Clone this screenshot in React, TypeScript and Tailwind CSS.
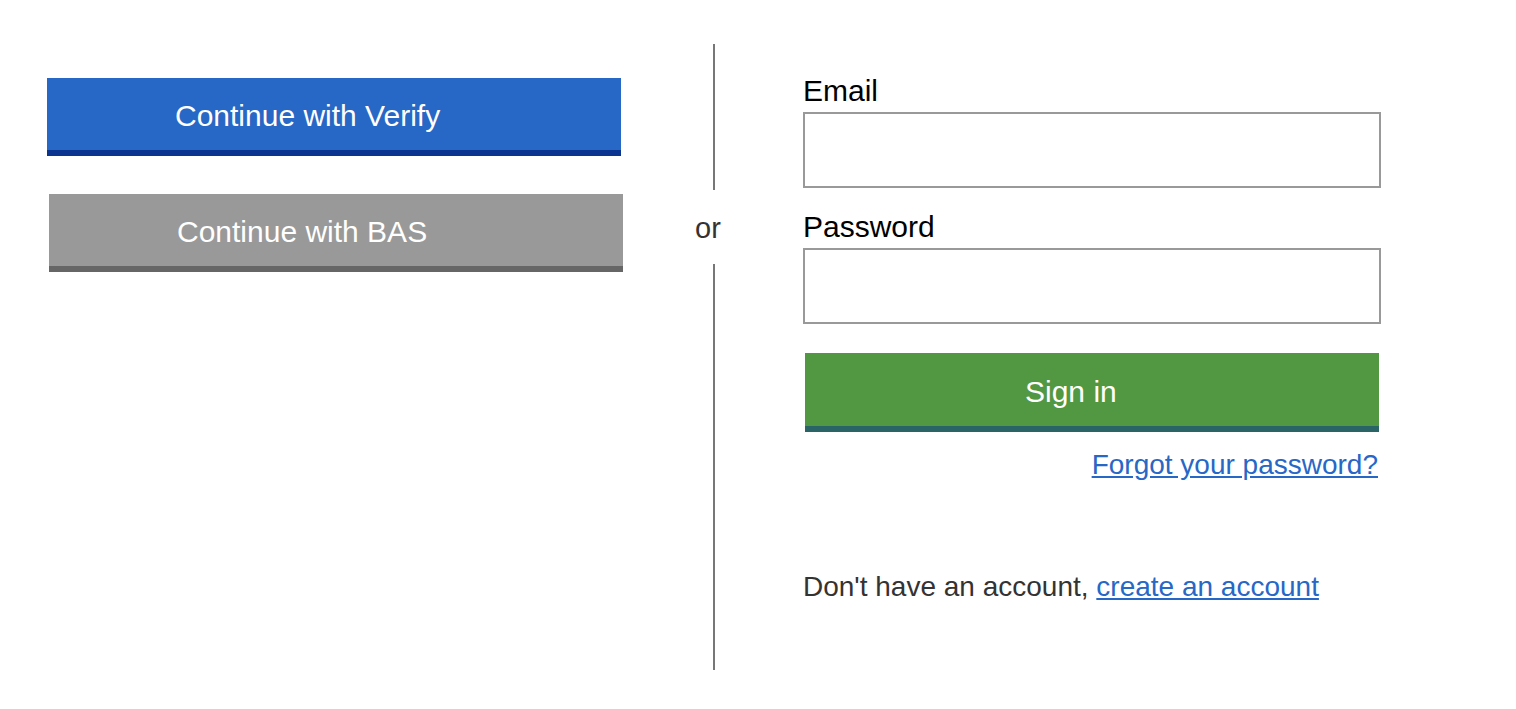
const Label = (props: { text: string; className?: string }) => (
  <label className={`block text-[30px] leading-[34px] text-black mb-[4px] ${props.className ?? ""}`}>
    {props.text}
  </label>
);

export default function App() {
  return (
    <div className="min-h-screen bg-white font-['Liberation_Sans',Arial,sans-serif]">
      <div className="flex pt-[44px]">
        {/* left: federated sign-in */}
        <div className="w-[576px] ml-[47px] pt-[34px]">
          <button className="flex items-center w-[574px] h-[78px] pl-[128px] pt-[3px] bg-[#2767c6] border-b-[6px] border-[#0b3490] text-white text-[30px]">
            Continue with Verify
          </button>
          <button className="flex items-center w-[574px] h-[78px] ml-[2px] mt-[38px] pl-[128px] pt-[2px] bg-[#999999] border-b-[6px] border-[#666666] text-white text-[30px]">
            Continue with BAS
          </button>
        </div>

        {/* divider */}
        <div className="w-[180px] flex flex-col items-center">
          <div className="w-[2px] h-[146px] bg-[#777777] ml-[2px]" />
          <div className="h-[74px] flex items-center pr-[10px] pt-[3px] text-[29px] text-[#333333]">or</div>
          <div className="w-[2px] h-[406px] bg-[#777777] ml-[2px]" />
        </div>

        {/* right: email sign-in */}
        <div className="w-[578px] pt-[30px]">
          <Label text="Email" />
          <input type="email" className="block w-[578px] h-[76px] border-2 border-[#999999] outline-none px-3 text-[24px]" />
          <Label text="Password" className="mt-[22px]" />
          <input type="password" className="block w-[578px] h-[76px] border-2 border-[#999999] outline-none px-3 text-[24px]" />
          <button className="flex items-center w-[574px] h-[79px] ml-[2px] mt-[29px] pl-[220px] pt-[3px] bg-[#529741] border-b-[6px] border-[#2a6467] text-white text-[30px]">
            Sign in
          </button>
          <div className="flex justify-end pr-[3px] mt-[17px]">
            <a href="#" className="text-[28px] leading-[32px] text-[#2767c6] underline">
              Forgot your password?
            </a>
          </div>
          <p className="mt-[90px] text-[28px] leading-[32px] text-[#333333]">
            Don't have an account,{" "}
            <a href="#" className="text-[#2767c6] underline">
              create an account
            </a>
          </p>
        </div>
      </div>
    </div>
  );
}
